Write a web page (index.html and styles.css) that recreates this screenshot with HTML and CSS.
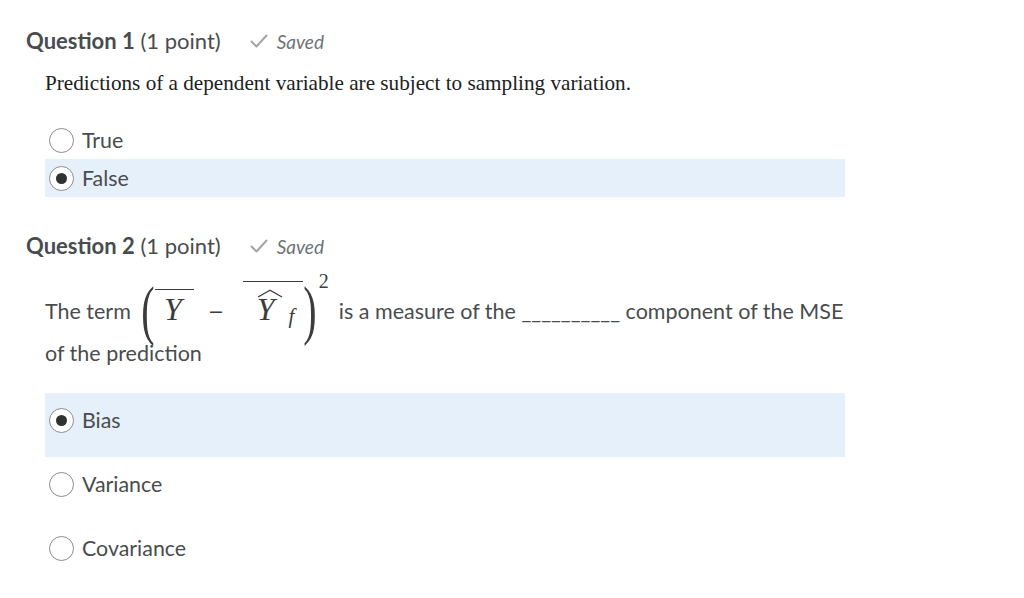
FILE: index.html
```html
<!DOCTYPE html>
<html>
<head>
<meta charset="utf-8">
<link rel="stylesheet" href="styles.css">
</head>
<body>
<div class="page">
  <section class="question q1">
    <div class="qhead">
      <h2 class="qtitle"><b>Question 1</b> (1 point)</h2>
      <span class="saved"><svg class="check" width="18" height="14" viewBox="0 0 18 14"><path d="M1.5 7.5 L6.5 12.5 L16.5 1.5" fill="none" stroke="#a2a5a8" stroke-width="2" stroke-linecap="round" stroke-linejoin="round"/></svg><i>Saved</i></span>
    </div>
    <p class="prompt serif">Predictions of a dependent variable are subject to sampling variation.</p>
    <div class="options short">
      <label class="opt"><span class="row"><span class="radio"></span><span class="lbl">True</span></span></label>
      <label class="opt sel"><span class="row"><span class="radio on"></span><span class="lbl">False</span></span></label>
    </div>
  </section>

  <section class="question q2">
    <div class="qhead">
      <h2 class="qtitle"><b>Question 2</b> (1 point)</h2>
      <span class="saved"><svg class="check" width="18" height="14" viewBox="0 0 18 14"><path d="M1.5 7.5 L6.5 12.5 L16.5 1.5" fill="none" stroke="#a2a5a8" stroke-width="2" stroke-linecap="round" stroke-linejoin="round"/></svg><i>Saved</i></span>
    </div>
    <div class="prompt2">
      <div class="line1">
        <span class="pre">The term</span>
        <span class="math">
          <span class="paren">(</span>
          <span class="ovl ovl1"><span class="mi">Y</span></span>
          <span class="minus">&minus;</span>
          <span class="ovl ovl2"><span class="hat"><span class="mi">Y</span><svg class="caret" width="26" height="9" viewBox="0 0 26 9"><path d="M1 8 L13 1.2 L25 8" fill="none" stroke="#3a3c3e" stroke-width="1.3"/></svg></span><span class="sub">f</span></span>
          <span class="paren">)</span>
          <span class="sup">2</span>
        </span>
        <span class="after">is a measure of the __________ component of the MSE</span>
      </div>
      <div class="line2">of the prediction</div>
    </div>
    <div class="options tall">
      <label class="opt sel"><span class="row"><span class="radio on"></span><span class="lbl">Bias</span></span></label>
      <label class="opt"><span class="row"><span class="radio"></span><span class="lbl">Variance</span></span></label>
      <label class="opt"><span class="row"><span class="radio"></span><span class="lbl">Covariance</span></span></label>
    </div>
  </section>
</div>
</body>
</html>
```
FILE: styles.css
```css
html, body {
  margin: 0;
  padding: 0;
  background: #ffffff;
}
body {
  font-family: Lato, "Liberation Sans", sans-serif;
  color: #494c4e;
}
.page {
  padding: 26px 0 0 26px;
  width: 819px;
}
.qhead {
  display: flex;
  align-items: center;
  height: 30px;
}
.qtitle {
  margin: 0;
  font-size: 22px;
  font-weight: 400;
  color: #494c4e;
  line-height: 30px;
}
.qtitle b { font-weight: 700; }
.saved {
  display: flex;
  align-items: center;
  margin-left: 29px;
  color: #6e7376;
  font-size: 19px;
}
.saved .check { margin-right: 9px; }
.serif { font-family: "Liberation Serif", serif; }
.prompt {
  margin: 14px 0 0 19px;
  font-size: 21.2px;
  line-height: 26px;
  color: #202122;
}
.options {
  margin: 25px 0 0 19px;
  display: flex;
  flex-direction: column;
}
.opt {
  display: flex;
  flex-direction: column;
  font-size: 21.4px;
  color: #494c4e;
}
.row {
  display: flex;
  align-items: center;
  height: 38px;
}
.short .opt { height: 38px; }
.tall .opt { height: 64px; }
.tall .row { margin-top: 8px; }
.opt.sel { background: #e6f0fb; }
.radio {
  box-sizing: border-box;
  width: 25px;
  height: 25px;
  border: 1px solid #8a8e91;
  border-radius: 50%;
  margin-left: 4px;
  margin-right: 8px;
  background: #fff;
  display: flex;
  align-items: center;
  justify-content: center;
}
.radio.on::after {
  content: "";
  width: 11px;
  height: 11px;
  border-radius: 50%;
  background: #2f3133;
}
.q2 { margin-top: 34px; }
.prompt2 {
  margin: 0 0 0 19px;
  font-size: 21.5px;
}
.line1 {
  display: flex;
  align-items: center;
  height: 60px;
  margin-top: 20px;
}
.math {
  display: flex;
  align-items: flex-start;
  height: 60px;
  font-family: "Liberation Serif", serif;
  color: #3a3c3e;
  margin-left: 10px;
}
.paren {
  display: block;
  width: 14px;
  font-size: 40px;
  line-height: 60px;
  height: 60px;
  text-align: center;
  transform: scaleY(1.65);
}
.ovl {
  display: flex;
  align-items: flex-start;
  border-top: 1.5px solid #3a3c3e;
  box-sizing: border-box;
}
.mi {
  display: block;
  font-style: italic;
  font-size: 32px;
  line-height: 32px;
}
.ovl1 {
  margin-top: 8px;
  width: 39px;
  padding: 2.5px 0 0 9px;
}
.minus {
  display: block;
  font-family: "DejaVu Serif", serif;
  font-size: 19px;
  line-height: 20px;
  margin: 20px 0 0 14px;
}
.ovl2 {
  margin-left: 19px;
  width: 60px;
  padding: 10.5px 0 0 14px;
}
.hat {
  position: relative;
  display: block;
}
.caret {
  position: absolute;
  left: 0;
  top: -4px;
}
.sub {
  display: block;
  font-family: "Liberation Serif", serif;
  font-style: italic;
  font-size: 21px;
  line-height: 20px;
  margin: 13px 0 0 14px;
}
.sup {
  display: block;
  font-family: "Liberation Serif", serif;
  font-size: 20px;
  line-height: 20px;
  margin: -10px 0 0 2px;
}
.after { margin-left: 10px; }
.line2 {
  line-height: 24px;
}
.tall { margin-top: 28px; }
```
